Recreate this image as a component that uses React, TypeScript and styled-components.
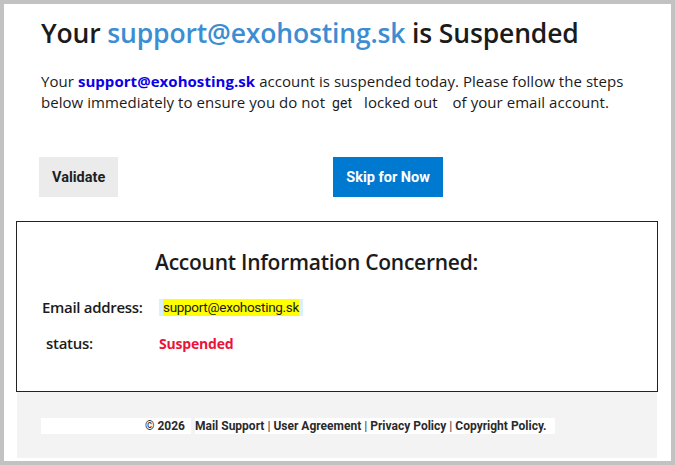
import React from 'react';
import styled, { createGlobalStyle } from 'styled-components';

const GlobalStyle = createGlobalStyle`
  html, body {
    margin: 0;
    padding: 0;
    background: #ffffff;
  }
  * {
    box-sizing: border-box;
  }
`;

const Frame = styled.div`
  width: 675px;
  height: 465px;
  border: 4px solid #c2c2c2;
  background: #ffffff;
  padding: 0 13px 0 12px;
  display: flex;
  flex-direction: column;
  font-family: 'Open Sans', 'Noto Sans', sans-serif;
  color: #1b1b1b;
`;

const Intro = styled.section`
  padding: 12px 0 0 25px;
`;

const Title = styled.h1`
  margin: 0;
  font-size: 26.5px;
  font-weight: 600;
  line-height: 34px;
  letter-spacing: -0.15px;
  color: #1b1b1b;
`;

const TitleEmail = styled.span`
  color: #3d8dd2;
`;

const Lead = styled.p`
  margin: 21px 0 0;
  max-width: 600px;
  font-size: 15px;
  line-height: 21px;
  letter-spacing: 0.05px;
  color: #1b1b1b;
`;

const LeadEmail = styled.a`
  color: #0b00e8;
  font-weight: 700;
  text-decoration: none;
`;

const Word = styled.span`
  font-family: Roboto, 'Liberation Sans', sans-serif;
  font-size: 14px;
  margin: 0 12px 0 7px;
`;

const Spacer = styled.span<{ $w: number }>`
  display: inline-block;
  width: ${({ $w }) => $w}px;
`;

const Actions = styled.div`
  display: flex;
  gap: 215px;
  padding: 43px 0 0 23px;
`;

const Button = styled.button<{ $primary?: boolean }>`
  height: 40px;
  border: none;
  padding: 0 13px;
  font-family: Roboto, 'Liberation Sans', sans-serif;
  font-weight: 700;
  font-size: 14.5px;
  letter-spacing: 0;
  color: ${({ $primary }) => ($primary ? '#ffffff' : '#1f1f1f')};
  background: ${({ $primary }) => ($primary ? '#0079d1' : '#ebebeb')};
  cursor: pointer;
`;

const InfoBox = styled.section`
  margin-top: 24px;
  height: 171px;
  border: 1px solid #232323;
  padding: 24px 0 0 25px;
`;

const InfoTitle = styled.h2`
  margin: 0 0 17px;
  padding-left: 113px;
  font-size: 21px;
  font-weight: 600;
  line-height: 32px;
  letter-spacing: -0.25px;
  color: #1b1b1b;
`;

const InfoRow = styled.div<{ $indent: number }>`
  display: grid;
  grid-template-columns: ${({ $indent }) => 117 - $indent}px auto;
  align-items: center;
  padding-left: ${({ $indent }) => $indent}px;
  height: 24px;
  margin-bottom: 12px;
`;

const Label = styled.span`
  font-size: 15px;
  font-weight: 600;
  letter-spacing: -0.3px;
  color: #1b1b1b;
`;

const Highlight = styled.span`
  justify-self: start;
  display: inline-flex;
  align-items: center;
  height: 17px;
  padding: 0 4px;
  background: #dcf0f8;
`;

const Marked = styled.mark`
  background: #ffff00;
  color: #1b1b1b;
  font-family: Roboto, 'Liberation Sans', sans-serif;
  font-size: 13.5px;
  font-weight: 400;
  letter-spacing: -0.3px;
  line-height: 17px;
  padding: 0;
`;

const Status = styled.span`
  font-size: 14px;
  font-weight: 700;
  letter-spacing: -0.2px;
  color: #ec1339;
`;

const Footer = styled.footer`
  margin: 0 1px;
  height: 66px;
  background: #f3f3f3;
  padding: 26px 0 0 24px;
  display: flex;
  align-items: flex-start;
  gap: 4px;
  font-family: Roboto, 'Liberation Sans', sans-serif;
  font-size: 12px;
  font-weight: 700;
  letter-spacing: 0;
  color: #2b2b2b;
`;

const FootCell = styled.span<{ $width: number; $align: 'left' | 'right' }>`
  display: block;
  width: ${({ $width }) => $width}px;
  height: 16px;
  line-height: 16px;
  background: #ffffff;
  text-align: ${({ $align }) => $align};
  padding: ${({ $align }) => ($align === 'right' ? '0 6px 0 0' : '0')};
`;

const FootLink = styled.a`
  color: #2b2b2b;
  text-decoration: none;
`;

const Sep = styled.span`
  margin: 0 3px;
  color: #555;
`;

export default function App() {
  const email = 'support@exohosting.sk';
  const links = ['Mail Support', 'User Agreement', 'Privacy Policy', 'Copyright Policy.'];

  return (
    <>
      <GlobalStyle />
      <Frame>
        <Intro>
          <Title>
            Your <TitleEmail>{email}</TitleEmail> is Suspended
          </Title>
          <Lead>
            Your <LeadEmail href="#">{email}</LeadEmail> account is suspended today. Please follow the steps below
            immediately to ensure you do not<Word>get</Word>locked out<Spacer $w={15} />of your email account.
          </Lead>
        </Intro>

        <Actions>
          <Button>Validate</Button>
          <Button $primary>Skip for Now</Button>
        </Actions>

        <InfoBox>
          <InfoTitle>Account Information Concerned:</InfoTitle>
          <InfoRow $indent={0}>
            <Label>Email address:</Label>
            <Highlight>
              <Marked>{email}</Marked>
            </Highlight>
          </InfoRow>
          <InfoRow $indent={4}>
            <Label>status:</Label>
            <Status>Suspended</Status>
          </InfoRow>
        </InfoBox>

        <Footer>
          <FootCell $width={150} $align="right">© 2026</FootCell>
          <FootCell $width={360} $align="left">
            {links.map((l, i) => (
              <React.Fragment key={l}>
                {i > 0 && <Sep>|</Sep>}
                <FootLink href="#">{l}</FootLink>
              </React.Fragment>
            ))}
          </FootCell>
        </Footer>
      </Frame>
    </>
  );
}
